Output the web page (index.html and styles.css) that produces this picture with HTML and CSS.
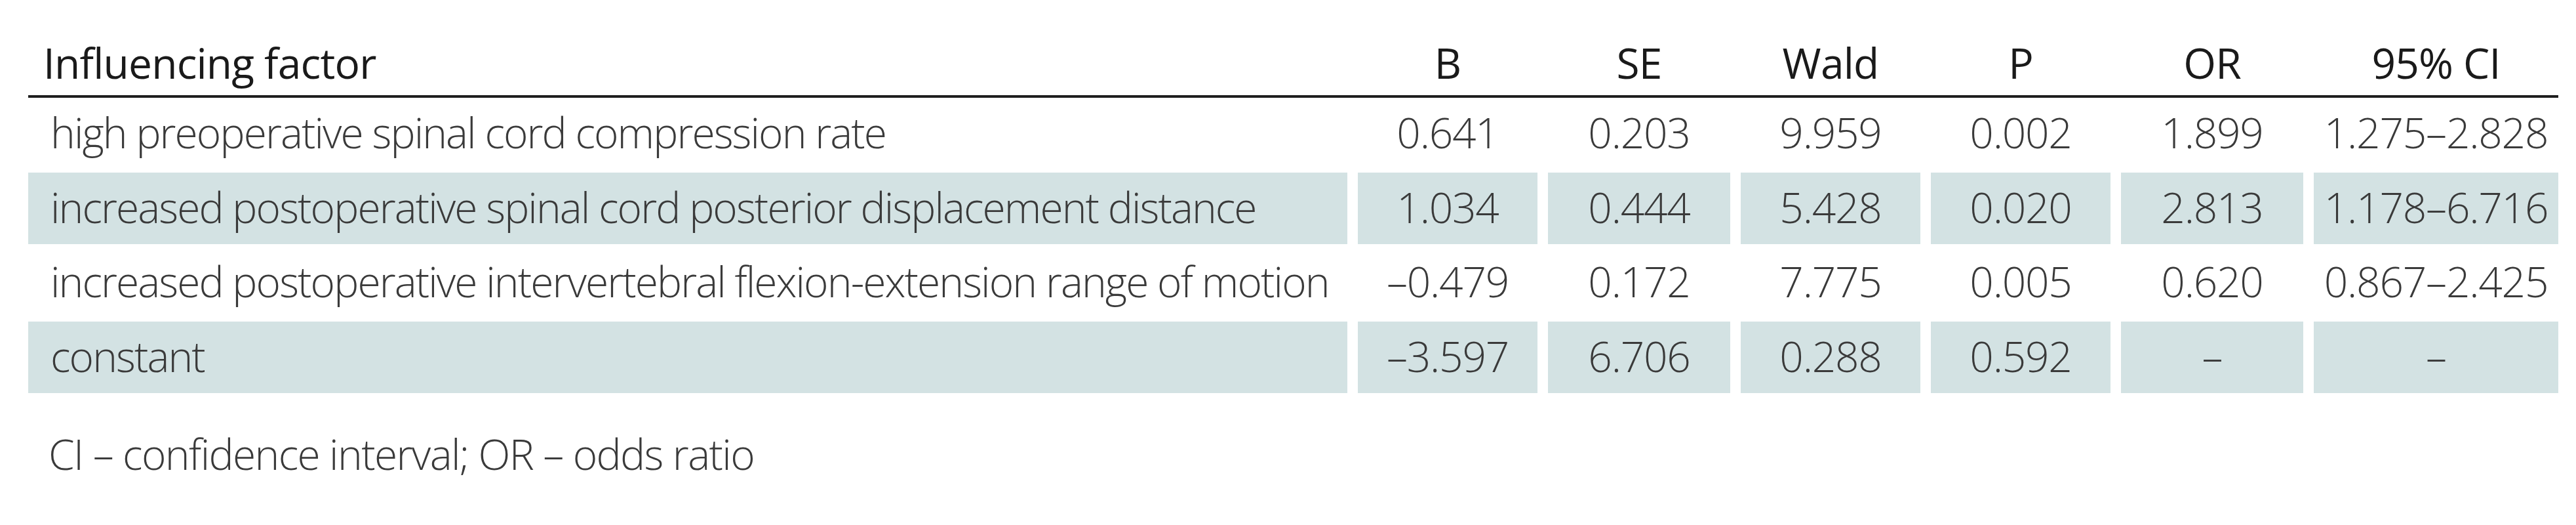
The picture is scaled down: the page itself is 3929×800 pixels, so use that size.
FILE: index.html
```html
<!DOCTYPE html>
<html lang="en">
<head>
<meta charset="utf-8">
<title>Influencing factors</title>
<link rel="stylesheet" href="styles.css">
</head>
<body>
<div class="page">
  <div class="table">
    <div class="row head">
      <div class="cell first">Influencing factor</div>
      <div class="cell">B</div>
      <div class="cell">SE</div>
      <div class="cell">Wald</div>
      <div class="cell">P</div>
      <div class="cell">OR</div>
      <div class="cell">95% CI</div>
    </div>
    <div class="body">
      <div class="row">
        <div class="cell first">high preoperative spinal cord compression rate</div>
        <div class="cell">0.641</div>
        <div class="cell">0.203</div>
        <div class="cell">9.959</div>
        <div class="cell">0.002</div>
        <div class="cell">1.899</div>
        <div class="cell">1.275–2.828</div>
      </div>
      <div class="row shaded">
        <div class="cell first">increased postoperative spinal cord posterior displacement distance</div>
        <div class="cell">1.034</div>
        <div class="cell">0.444</div>
        <div class="cell">5.428</div>
        <div class="cell">0.020</div>
        <div class="cell">2.813</div>
        <div class="cell">1.178–6.716</div>
      </div>
      <div class="row">
        <div class="cell first">increased postoperative intervertebral flexion-extension range of motion</div>
        <div class="cell">–0.479</div>
        <div class="cell">0.172</div>
        <div class="cell">7.775</div>
        <div class="cell">0.005</div>
        <div class="cell">0.620</div>
        <div class="cell">0.867–2.425</div>
      </div>
      <div class="row shaded">
        <div class="cell first">constant</div>
        <div class="cell">–3.597</div>
        <div class="cell">6.706</div>
        <div class="cell">0.288</div>
        <div class="cell">0.592</div>
        <div class="cell">–</div>
        <div class="cell">–</div>
      </div>
    </div>
  </div>
  <p class="note">CI – confidence interval; OR – odds ratio</p>
</div>
</body>
</html>
```

FILE: styles.css
```css
html, body {
  margin: 0;
  padding: 0;
  background: #ffffff;
}

body {
  font-family: "Open Sans", "Liberation Sans", sans-serif;
  font-size: 64px;
  color: #3a3a3a;
}

.page {
  padding: 0 27px 0 43px;
}

.table {
  width: 3859px;
}

.row {
  display: grid;
  grid-template-columns: 2012px 274px 278px 274px 274px 278px 373px;
  column-gap: 16px;
}

.head {
  padding-top: 64px;
  padding-bottom: 17px;
  border-bottom: 4px solid #1e1e1e;
  color: #1a1a1a;
  font-weight: 400;
  line-height: 64px;
  letter-spacing: -0.8px;
}

.head .cell.first {
  padding-left: 23px;
}

.body {
  display: grid;
  row-gap: 4.5px;
}

.body .cell {
  height: 109px;
  line-height: 105px;
  padding-bottom: 4px;
  box-sizing: border-box;
  font-weight: 300;
  white-space: nowrap;
  letter-spacing: -1.2px;
}

.body .cell.first {
  letter-spacing: -1.9px;
}

.cell {
  text-align: center;
}

.cell.first {
  text-align: left;
  padding-left: 34px;
}

.shaded .cell {
  background: #d3e2e3;
}

.note {
  margin: 61px 0 0 31px;
  line-height: 64px;
  font-weight: 300;
  color: #3a3a3a;
  letter-spacing: -1.6px;
}
```
